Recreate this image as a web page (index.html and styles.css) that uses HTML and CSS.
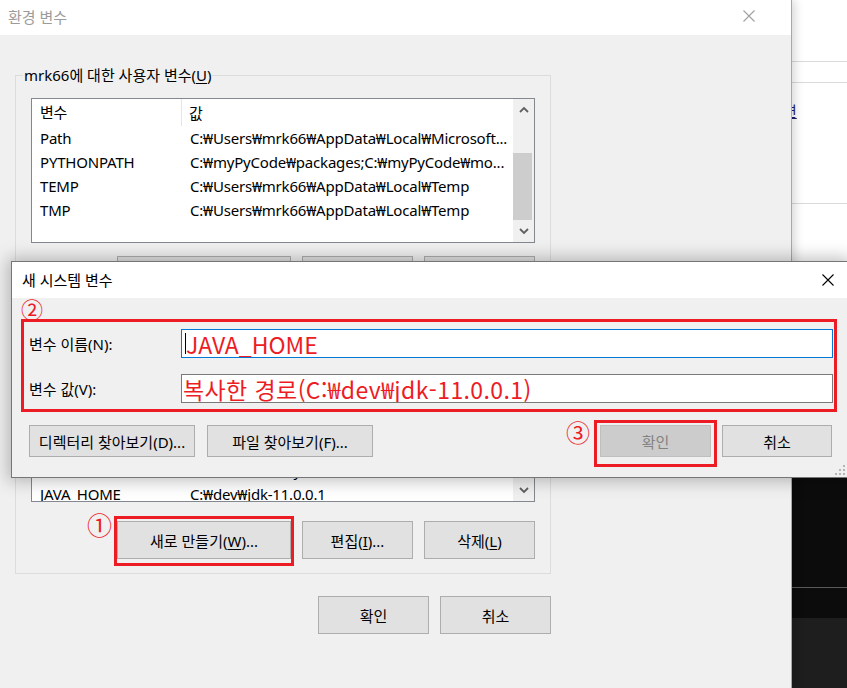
FILE: index.html
```html
<!DOCTYPE html>
<html lang="ko">
<head>
<meta charset="utf-8">
<title>환경 변수</title>
<link rel="stylesheet" href="styles.css">
</head>
<body>
<div class="desktop">
  <div class="env">
    <div class="env-title">
      <span class="env-title-text">환경 변수</span>
      <svg class="env-close" width="12" height="12" viewBox="0 0 12 12"><path d="M0.5 0.5L11.5 11.5M11.5 0.5L0.5 11.5" stroke="#a0a0a0" stroke-width="1.1"/></svg>
    </div>
    <div class="env-body">
      <div class="group group-user">
        <div class="group-label">mrk66에 대한 사용자 변수(<u>U</u>)</div>
        <div class="list list-user">
          <div class="list-main">
            <div class="list-head"><div class="c1">변수</div><div class="c2">값</div></div>
            <div class="row"><div class="c1">Path</div><div class="c2">C:₩Users₩mrk66₩AppData₩Local₩Microsoft...</div></div>
            <div class="row"><div class="c1">PYTHONPATH</div><div class="c2">C:₩myPyCode₩packages;C:₩myPyCode₩mo...</div></div>
            <div class="row"><div class="c1">TEMP</div><div class="c2">C:₩Users₩mrk66₩AppData₩Local₩Temp</div></div>
            <div class="row"><div class="c1">TMP</div><div class="c2">C:₩Users₩mrk66₩AppData₩Local₩Temp</div></div>
          </div>
          <div class="scrollbar">
            <div class="sb-btn"><svg width="10" height="7" viewBox="0 0 10 7"><path d="M1 6L5 2L9 6" fill="none" stroke="#606060" stroke-width="1.8"/></svg></div>
            <div class="sb-track"><div class="sb-thumb"></div></div>
            <div class="sb-btn"><svg width="10" height="7" viewBox="0 0 10 7"><path d="M1 1L5 5L9 1" fill="none" stroke="#606060" stroke-width="1.8"/></svg></div>
          </div>
        </div>
        <div class="btn-row">
          <button class="btn btn-wide">새로 만들기(<u>N</u>)...</button>
          <button class="btn">편집(<u>E</u>)...</button>
          <button class="btn">삭제(<u>D</u>)</button>
        </div>
      </div>

      <div class="group group-sys">
        <div class="group-label">시스템 변수(<u>S</u>)</div>
        <div class="list list-sys">
          <div class="list-main">
            <div class="list-head"><div class="c1">변수</div><div class="c2">값</div></div>
            <div class="rows-sys">
              <div class="row"><div class="c1">ComSpec</div><div class="c2">C:₩WINDOWS₩system32₩cmd.exe</div></div>
              <div class="row"><div class="c1">DriverData</div><div class="c2">C:₩Windows₩System32₩Drivers₩DriverData</div></div>
              <div class="row"><div class="c1">JAVA_HOME</div><div class="c2">C:₩dev₩jdk-11.0.0.1</div></div>
            </div>
          </div>
          <div class="scrollbar scrollbar-sys">
            <div class="sb-track"></div>
            <div class="sb-btn"><svg width="10" height="7" viewBox="0 0 10 7"><path d="M1 1L5 5L9 1" fill="none" stroke="#606060" stroke-width="1.8"/></svg></div>
          </div>
        </div>
        <div class="btn-row btn-row-sys">
          <span class="annot-wrap">
            <button class="btn btn-wide">새로 만들기(<u>W</u>)...</button>
            <span class="annot-box box-new"></span>
            <span class="mark mark-1">①</span>
          </span>
          <button class="btn">편집(<u>I</u>)...</button>
          <button class="btn">삭제(<u>L</u>)</button>
        </div>
      </div>

      <div class="footer">
        <button class="btn btn-foot">확인</button>
        <button class="btn btn-foot">취소</button>
      </div>
    </div>
  </div>

  <div class="side">
    <div class="side-top">
      <div class="s-a"></div>
      <div class="s-b"></div>
      <div class="s-c"><span class="s-link">변</span></div>
      <div class="s-d"></div>
    </div>
    <div class="side-dark1"></div>
    <div class="side-dark2"></div>
    <div class="side-dark3"></div>
  </div>
</div>

<div class="dialog">
  <div class="dlg-title">
    <span class="dlg-title-text">새 시스템 변수</span>
    <svg class="dlg-close" width="12" height="12" viewBox="0 0 12 12"><path d="M0.5 0.5L11.5 11.5M11.5 0.5L0.5 11.5" stroke="#000" stroke-width="1.1"/></svg>
  </div>
  <div class="dlg-body">
    <span class="mark mark-2">②</span>
    <div class="field-box">
      <div class="field-row">
        <div class="field-label">변수 이름(N):</div>
        <div class="input input-focus"><span class="caret"></span>JAVA_HOME</div>
      </div>
      <div class="field-row">
        <div class="field-label">변수 값(V):</div>
        <div class="input input-path">복사한 경로(C:₩dev₩jdk-11.0.0.1)</div>
      </div>
    </div>
    <div class="dlg-buttons">
      <div class="dlg-left">
        <button class="btn btn-dlg">디렉터리 찾아보기(D)...</button>
        <button class="btn btn-dlg">파일 찾아보기(F)...</button>
      </div>
      <div class="dlg-right">
        <span class="annot-wrap">
          <button class="btn btn-ok" disabled>확인</button>
          <span class="annot-box box-ok"></span>
          <span class="mark mark-3">③</span>
        </span>
        <button class="btn btn-cancel">취소</button>
      </div>
    </div>
  </div>
  <svg class="grip" width="12" height="12" viewBox="0 0 12 12">
    <rect x="9" y="1" width="2" height="2" fill="#b4b4b4"/>
    <rect x="5" y="5" width="2" height="2" fill="#b4b4b4"/>
    <rect x="9" y="5" width="2" height="2" fill="#b4b4b4"/>
    <rect x="1" y="9" width="2" height="2" fill="#b4b4b4"/>
    <rect x="5" y="9" width="2" height="2" fill="#b4b4b4"/>
    <rect x="9" y="9" width="2" height="2" fill="#b4b4b4"/>
  </svg>
</div>
</body>
</html>
```

FILE: styles.css
```css
* { box-sizing: border-box; }

html, body {
  margin: 0;
  padding: 0;
}

body {
  width: 847px;
  height: 688px;
  overflow: hidden;
  position: relative;
  background: #ffffff;
  font-family: "Noto Sans", "Noto Sans CJK KR", sans-serif;
  font-size: 15px;
  color: #000;
}

u { text-decoration: underline; text-underline-offset: 2px; }

.desktop {
  display: flex;
  height: 688px;
}

/* ---------- main window ---------- */
.env {
  width: 792px;
  flex: 0 0 792px;
  display: flex;
  flex-direction: column;
  border-right: 1px solid #a8a8a8;
  position: relative;
  z-index: 1;
  box-shadow: 3px 0 9px rgba(0, 0, 0, 0.16);
}

.env-title {
  height: 35px;
  flex: 0 0 35px;
  background: #fff;
  display: flex;
  align-items: center;
  justify-content: space-between;
  padding: 0 36px 0 8px;
}

.env-title-text {
  color: #9b9b9b;
  font-size: 15px;
  line-height: 20px;
  margin-top: -1px;
}

.env-close { display: block; margin-top: -4px; }

.env-body {
  flex: 1;
  background: #f0f0f0;
  padding: 40px 0 0 15px;
}

.group {
  width: 536px;
  border: 1px solid #dcdcdc;
  padding: 0 15px 14px 15px;
}

.group-sys { margin-top: 20px; }

.group-label {
  width: fit-content;
  margin: -11px 0 0 -8px;
  padding: 0 1px;
  background: #f0f0f0;
  line-height: 20px;
  white-space: nowrap;
}

.list {
  margin-top: 13px;
  width: 504px;
  border: 1px solid #828790;
  background: #fff;
  display: flex;
  overflow: hidden;
}

.list-user { height: 145px; }
.list-sys { height: 150px; }

.list-main {
  flex: 1;
  overflow: hidden;
  letter-spacing: -0.2px;
}

.list-head, .row {
  display: flex;
  white-space: nowrap;
}

.list-head { height: 27px; align-items: center; }
.row { height: 24px; align-items: center; }

.c1 {
  width: 150px;
  flex: 0 0 150px;
  padding-left: 8px;
  overflow: hidden;
}

.c2 {
  flex: 1;
  padding-left: 8px;
  overflow: hidden;
}

.list-head .c1 {
  border-right: 1px solid #e5e5e5;
  height: 27px;
  line-height: 27px;
}

.list-head .c2 { padding-left: 7px; }

.rows-sys { margin-top: 54px; }

.scrollbar {
  width: 21px;
  flex: 0 0 21px;
  background: #f0f0f0;
  display: flex;
  flex-direction: column;
}

.sb-btn {
  height: 21px;
  flex: 0 0 21px;
  display: flex;
  align-items: center;
  justify-content: center;
}

.sb-btn svg { display: block; }

.sb-track {
  flex: 1;
  padding-top: 33px;
}

.sb-thumb {
  width: 19px;
  height: 67px;
  background: #cdcdcd;
}

.scrollbar-sys .sb-btn { flex-basis: 22px; height: 22px; }

.btn {
  font-family: inherit;
  font-size: 15px;
  color: #000;
  background: #e1e1e1;
  border: 1px solid #adadad;
  padding: 0;
  margin: 0;
  white-space: nowrap;
}

.btn-row {
  margin-top: 13px;
  display: flex;
  justify-content: flex-end;
  gap: 11px;
}

.btn-row-sys { margin-top: 19px; }

.btn-row .btn {
  width: 111px;
  height: 38px;
}

.btn-row .btn-wide { width: 174px; }

.footer {
  width: 536px;
  margin-top: 22px;
  display: flex;
  justify-content: flex-end;
  gap: 11px;
}

.btn-foot {
  width: 111px;
  height: 38px;
}

/* annotations */
.annot-wrap {
  position: relative;
  display: flex;
}

.annot-box {
  position: absolute;
  border: 3px solid #ed1c24;
  pointer-events: none;
}

.box-new {
  left: -3px;
  right: -3px;
  top: -5px;
  bottom: -7px;
}

.box-ok {
  left: -6px;
  right: -6px;
  top: -5px;
  bottom: -10px;
}

.mark {
  position: absolute;
  color: #ed1c24;
  font-family: "Noto Sans CJK KR", sans-serif;
  line-height: 1;
  white-space: nowrap;
}

.mark-1 {
  left: -30px;
  top: -9px;
  font-size: 25px;
}

.mark-2 {
  left: 9px;
  top: -1px;
  font-size: 22px;
}

.mark-3 {
  left: -34px;
  top: -5px;
  font-size: 24px;
}

/* ---------- right strip ---------- */
.side {
  flex: 1;
  display: flex;
  flex-direction: column;
}

.side-top {
  height: 420px;
  flex: 0 0 420px;
  background: #fff;
}

.s-a { height: 62px; border-bottom: 1px solid #dadada; }
.s-b { height: 21px; border-bottom: 1px solid #dadada; }
.s-c {
  height: 121px;
  border-bottom: 1px solid #dadada;
  padding-top: 18px;
  overflow: hidden;
  white-space: nowrap;
}

.s-link {
  display: inline-block;
  margin-left: -9px;
  color: #1f1f6e;
  text-decoration: underline;
  line-height: 20px;
  font-family: "Noto Sans CJK KR", sans-serif;
}

.side-dark1 {
  height: 168px;
  flex: 0 0 168px;
  background: #0c0c0c;
  border-bottom: 1px solid #5a5a5a;
}

.side-dark2 {
  height: 30px;
  flex: 0 0 30px;
  background: #0c0c0c;
}

.side-dark3 {
  flex: 1;
  background: #1e1e1e;
}

/* ---------- new system variable dialog ---------- */
.dialog {
  position: absolute;
  left: 11px;
  top: 261px;
  width: 837px;
  border: 1px solid #767676;
  background: #f0f0f0;
  box-shadow: 0 0 16px 3px rgba(0, 0, 0, 0.26);
  z-index: 5;
}

.dlg-title {
  height: 36px;
  background: #fff;
  display: flex;
  align-items: center;
  justify-content: space-between;
  padding: 0 13px 0 10px;
}

.dlg-title-text { line-height: 20px; margin-top: -1px; }
.dlg-close { display: block; }

.dlg-body {
  position: relative;
  padding: 21px 10px 20px 9px;
}

.field-box {
  border: 3px solid #ed1c24;
  padding: 7px 1px 6px 5px;
  display: flex;
  flex-direction: column;
  gap: 16px;
}

.field-row {
  display: flex;
  align-items: center;
}

.field-label {
  width: 152px;
  flex: 0 0 152px;
  white-space: nowrap;
}

.input {
  flex: 1;
  height: 29px;
  border: 1px solid #7a7a7a;
  background: #fff;
  display: flex;
  align-items: center;
  padding-left: 1px;
  color: #ed1c24;
  font-size: 23px;
  white-space: nowrap;
  overflow: hidden;
  font-family: "Noto Sans CJK KR", sans-serif;
}

.input-focus { border-color: #0078d7; }
.input-path { letter-spacing: 0.4px; }

.caret {
  display: inline-block;
  width: 1px;
  height: 21px;
  background: #000;
  margin: 0 0 0 2px;
}

.dlg-buttons {
  margin-top: 13px;
  padding: 0 5px 0 8px;
  display: flex;
  justify-content: space-between;
}

.dlg-left, .dlg-right {
  display: flex;
  gap: 12px;
}

.dlg-right { gap: 11px; }

.btn-dlg {
  width: 166px;
  height: 32px;
}

.btn-ok {
  width: 111px;
  height: 32px;
  background: #cccccc;
  border-color: #bfbfbf;
  color: #838383;
}

.btn-cancel {
  width: 110px;
  height: 32px;
}

.grip {
  position: absolute;
  right: 1px;
  bottom: 1px;
  display: block;
}
```
